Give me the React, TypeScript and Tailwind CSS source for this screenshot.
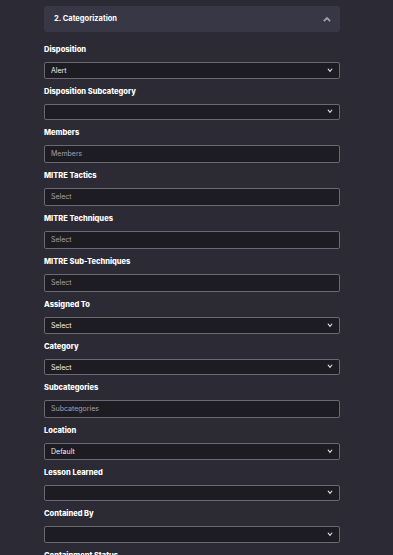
import React from "react";

type Field = { label: string; kind: "select" | "input"; value?: string; placeholder?: string };

const fields: Field[] = [
  { label: "Disposition", kind: "select", value: "Alert" },
  { label: "Disposition Subcategory", kind: "select", value: "" },
  { label: "Members", kind: "input", placeholder: "Members" },
  { label: "MITRE Tactics", kind: "input", placeholder: "Select" },
  { label: "MITRE Techniques", kind: "input", placeholder: "Select" },
  { label: "MITRE Sub-Techniques", kind: "input", placeholder: "Select" },
  { label: "Assigned To", kind: "select", value: "Select" },
  { label: "Category", kind: "select", value: "Select" },
  { label: "Subcategories", kind: "input", placeholder: "Subcategories" },
  { label: "Location", kind: "select", value: "Default" },
  { label: "Lesson Learned", kind: "select", value: "" },
  { label: "Contained By", kind: "select", value: "" },
  { label: "Containment Status", kind: "select", value: "" },
];

function ChevronDown() {
  return (
    <svg width="6" height="5" viewBox="0 0 6 5" fill="none" stroke="#e5e5ea" strokeWidth="1.1" strokeLinecap="square">
      <polyline points="1.2,1.2 3,3.4 4.8,1.2" />
    </svg>
  );
}

function ChevronUp() {
  return (
    <svg width="8" height="6" viewBox="0 0 8 6" fill="none" stroke="#9e9dab" strokeWidth="1.8" strokeLinecap="square">
      <polyline points="1.5,4.5 4,2 6.5,4.5" />
    </svg>
  );
}

export default function App() {
  return (
    <div className="h-[555px] overflow-hidden bg-[#2b2a35] font-['Inter',sans-serif] antialiased">
      <div className="ml-[44px] w-[296px] pt-[6px]">
        {/* section header */}
        <div className="h-[26px] rounded-[3px] bg-[#383745] flex items-center justify-between pl-[10px] pr-[9px]">
          <span className="text-[7.5px] font-bold text-white">2. Categorization</span>
          <ChevronUp />
        </div>

        <div className="mt-[12px] flex flex-col">
          {fields.map((f) => (
            <div key={f.label} className="flex flex-col">
              <div className="h-[10px] leading-[12px] text-[7.5px] font-extrabold text-white">{f.label}</div>
              {f.kind === "select" ? (
                <div className="mt-[8px] mb-[7px] h-[16.5px] rounded-[2px] border border-[#6a6973] bg-[#1d1c23] flex items-center justify-between pl-[6px] pr-[6px]">
                  <span className="text-[7px] text-[#f0f0f3] pt-[2px]">{f.value}</span>
                  <ChevronDown />
                </div>
              ) : (
                <div className="mt-[8px] mb-[7px] h-[18px] rounded-[2px] border border-[#6a6973] bg-[#1d1c23] flex items-center pl-[6px]">
                  <span className="text-[7px] text-[#a3a2ad]">{f.placeholder}</span>
                </div>
              )}
            </div>
          ))}
        </div>
      </div>
    </div>
  );
}
